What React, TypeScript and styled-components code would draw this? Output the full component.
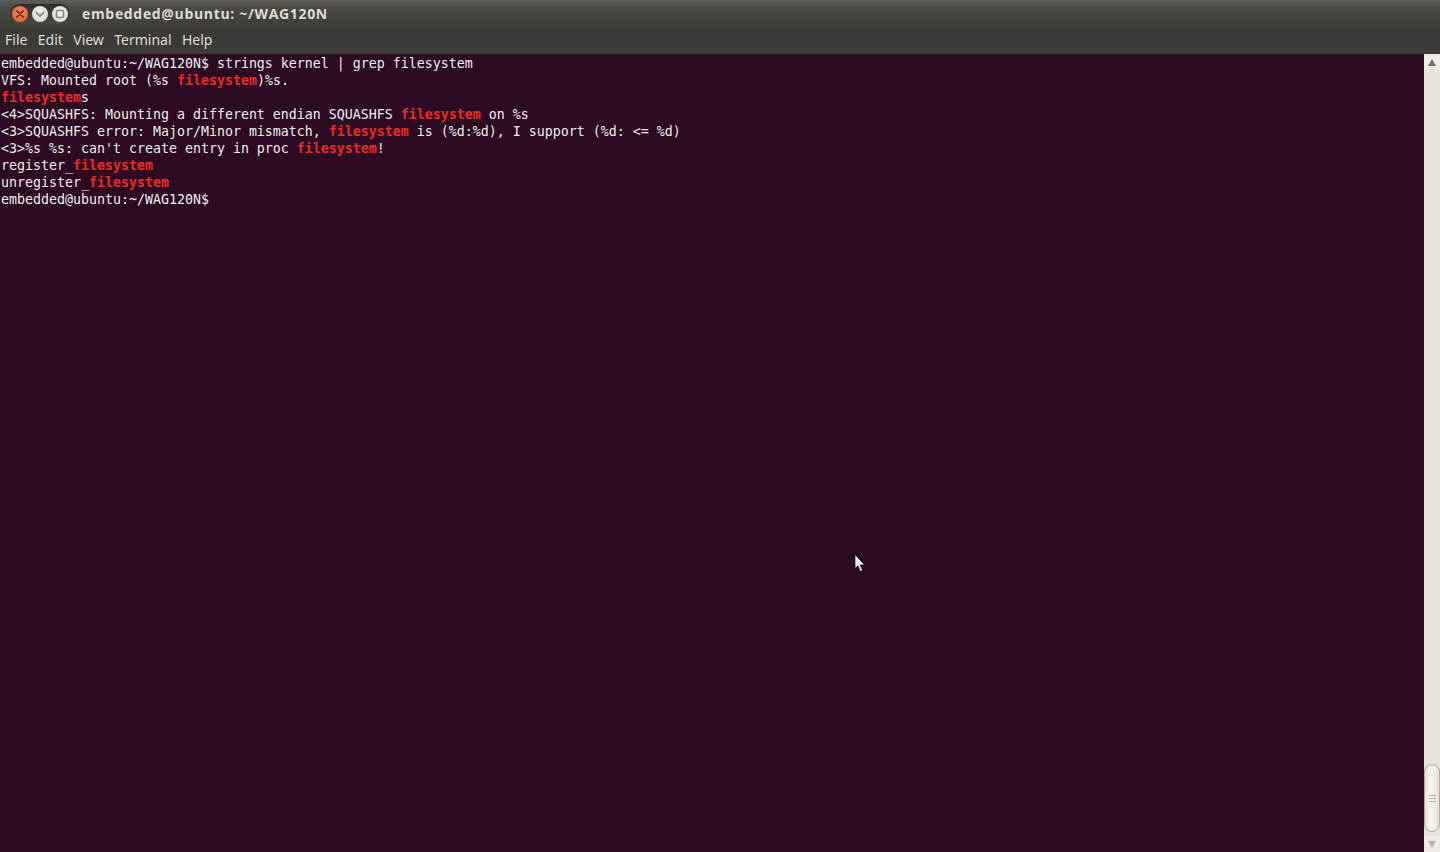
import React from "react";
import styled, { createGlobalStyle } from "styled-components";

const lines: string[][] = [
	["embedded@ubuntu:~/WAG120N$ strings kernel | grep filesystem"],
	["VFS: Mounted root (%s ", "filesystem", ")%s."],
	["", "filesystem", "s"],
	["<4>SQUASHFS: Mounting a different endian SQUASHFS ", "filesystem", " on %s"],
	["<3>SQUASHFS error: Major/Minor mismatch, ", "filesystem", " is (%d:%d), I support (%d: <= %d)"],
	["<3>%s %s: can't create entry in proc ", "filesystem", "!"],
	["register_", "filesystem"],
	["unregister_", "filesystem"],
	["embedded@ubuntu:~/WAG120N$"],
];

const menus = ["File", "Edit", "View", "Terminal", "Help"];

const App = () => {
	return (
		<Window>
			<GlobalStyle />
			<TitleBar>
				<Controls>
					<CloseButton>
						<svg width="10" height="10" viewBox="0 0 10 10">
							<path d="M2 2 L8 8 M8 2 L2 8" stroke="#6e3a22" strokeWidth="1.8" strokeLinecap="round" />
						</svg>
					</CloseButton>
					<RoundButton>
						<svg width="10" height="10" viewBox="0 0 10 10">
							<path d="M1.5 3.5 L5 7 L8.5 3.5" stroke="#8a8880" strokeWidth="1.8" fill="none" strokeLinecap="round" />
						</svg>
					</RoundButton>
					<RoundButton>
						<svg width="10" height="10" viewBox="0 0 10 10">
							<rect x="1.5" y="1.5" width="7" height="7" rx="1" stroke="#8a8880" strokeWidth="1.6" fill="none" />
						</svg>
					</RoundButton>
				</Controls>
				<Title>embedded@ubuntu: ~/WAG120N</Title>
			</TitleBar>
			<MenuBar>
				{menus.map((m) => (
					<MenuItem key={m}>{m}</MenuItem>
				))}
			</MenuBar>
			<Body>
				<Terminal>
					{lines.map((parts, i) => (
						<Line key={i}>
							{parts.map((p, j) => (j === 1 ? <Match key={j}>{p}</Match> : <span key={j}>{p}</span>))}
						</Line>
					))}
				</Terminal>
				<Scrollbar>
					<Arrow>
						<svg width="8" height="7" viewBox="0 0 8 7">
							<path d="M4 0 L8 7 L0 7 Z" fill="#6f6d66" />
						</svg>
					</Arrow>
					<Track>
						<Thumb>
							<Grip />
							<Grip />
							<Grip />
						</Thumb>
					</Track>
					<Arrow>
						<svg width="8" height="7" viewBox="0 0 8 7">
							<path d="M0 0 L8 0 L4 7 Z" fill="#b5b1a8" />
						</svg>
					</Arrow>
				</Scrollbar>
				<Pointer>
					<svg width="12" height="19" viewBox="0 0 12 19">
						<path d="M1 0.5 L1 14.5 L4 11.8 L6.4 17.5 L8.6 16.6 L6.2 11 L10.5 11 Z" fill="#fff" stroke="#000" strokeWidth="0.7" />
					</svg>
				</Pointer>
			</Body>
		</Window>
	);
};

export default App;

const GlobalStyle = createGlobalStyle`
	html, body {
		margin: 0;
		padding: 0;
		background: #2c0a22;
		overflow: hidden;
	}
`;

const Window = styled.div`
	width: 1440px;
	height: 852px;
	display: flex;
	flex-direction: column;
	overflow: hidden;
`;

const TitleBar = styled.div`
	height: 28px;
	display: flex;
	align-items: center;
	padding-left: 10px;
	background: linear-gradient(#5f5d56 0, #4a4943 8px, #3d3c37 100%);
	flex-shrink: 0;
`;

const Controls = styled.div`
	width: 60px;
	height: 20px;
	display: flex;
	align-items: center;
	gap: 4px;
	padding: 0 2px;
	box-sizing: border-box;
	border-radius: 10px;
	background: linear-gradient(#2f2e2c, #4b4a45);
`;

const RoundButton = styled.div`
	width: 16px;
	height: 16px;
	border-radius: 50%;
	display: flex;
	align-items: center;
	justify-content: center;
	background: radial-gradient(circle at 50% 40%, #f4f2ec, #d3d0c7);
`;

const CloseButton = styled(RoundButton)`
	background: radial-gradient(circle at 50% 40%, #f28a5a, #e4582a);
`;

const Title = styled.div`
	margin: 0 0 1px 12px;
	font-family: "Open Sans", "Noto Sans", sans-serif;
	font-weight: 700;
	font-size: 14px;
	letter-spacing: 0.67px;
	color: #dfdbd2;
	white-space: nowrap;
`;

const MenuBar = styled.div`
	height: 26px;
	display: flex;
	align-items: center;
	gap: 10.4px;
	padding: 0 0 3px 5px;
	box-sizing: border-box;
	background: #3c3b37;
	flex-shrink: 0;
`;

const MenuItem = styled.div`
	font-family: "Noto Sans", "Open Sans", sans-serif;
	font-size: 14px;
	color: #dfdbd2;
`;

const Body = styled.div`
	flex: 1;
	display: flex;
	position: relative;
	min-height: 0;
`;

const Terminal = styled.div`
	flex: 1;
	background: #2c0a22;
	padding: 1px 0 0 1px;
	font-family: "DejaVu Sans Mono", "Liberation Mono", monospace;
	font-size: 13.29px;
	line-height: 17px;
	color: #eeeeec;
`;

const Line = styled.div`
	height: 17px;
	white-space: pre;
`;

const Match = styled.span`
	color: #ef2929;
	font-weight: 700;
`;

const Scrollbar = styled.div`
	width: 16px;
	display: flex;
	flex-direction: column;
	background: #efebe5;
	flex-shrink: 0;
`;

const Arrow = styled.div`
	height: 16px;
	display: flex;
	align-items: center;
	justify-content: center;
	flex-shrink: 0;
`;

const Track = styled.div`
	flex: 1;
	display: flex;
	flex-direction: column;
	justify-content: flex-end;
	background: #e8e3da;
`;

const Thumb = styled.div`
	height: 68px;
	margin-bottom: 4px;
	display: flex;
	flex-direction: column;
	align-items: center;
	justify-content: center;
	gap: 2px;
	border: 1px solid #b6a98f;
	border-radius: 8px;
	background: linear-gradient(to right, #e9e4da, #f9f7f3 45%, #e4dfd4);
	box-sizing: border-box;
`;

const Grip = styled.div`
	width: 7px;
	height: 1px;
	background: #b6ab97;
`;

const Pointer = styled.div`
	position: absolute;
	left: 854px;
	top: 500px;
	height: 19px;
	line-height: 0;
`;
